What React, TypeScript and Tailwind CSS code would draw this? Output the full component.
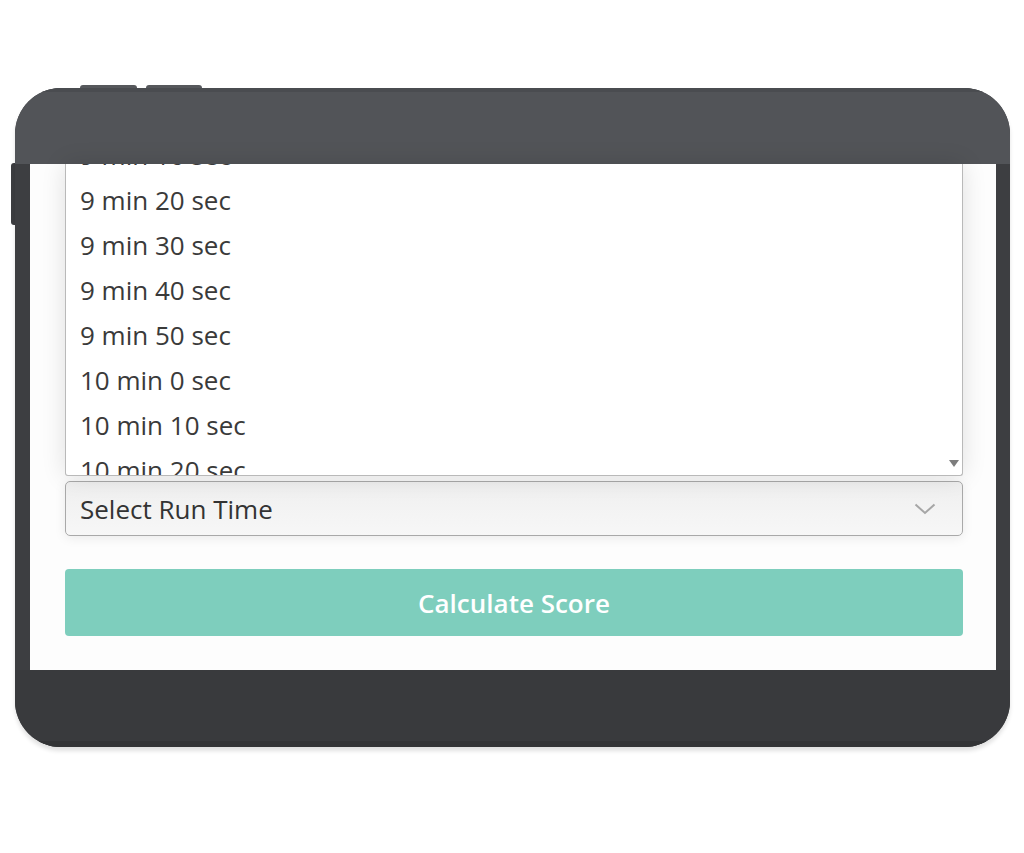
import React from "react";

const items = [
  "9 min 10 sec",
  "9 min 20 sec",
  "9 min 30 sec",
  "9 min 40 sec",
  "9 min 50 sec",
  "10 min 0 sec",
  "10 min 10 sec",
  "10 min 20 sec",
];

export default function App() {
  return (
    <div
      className="w-[1024px] h-[853px] bg-white overflow-hidden"
      style={{ fontFamily: '"Open Sans", "Noto Sans", sans-serif' }}
    >
      <div className="pt-[88px] pl-[15px]">
        <div className="relative w-[995px]">
          {/* top buttons */}
          <div className="absolute left-[65px] top-[-3px] w-[57px] h-[6px] rounded-t-[3px] bg-[#56585c]" />
          <div className="absolute left-[131px] top-[-3px] w-[56px] h-[6px] rounded-t-[3px] bg-[#56585c]" />
          {/* side button */}
          <div className="absolute left-[-4px] top-[75px] w-[6px] h-[62px] rounded-l-[3px] bg-[#3c3d40]" />
          <div className="relative h-[659px] rounded-[46px] overflow-hidden bg-[#3d3e41] flex flex-col shadow-[0_4px_4px_rgba(0,0,0,0.12)]">
            {/* top bezel */}
            <div className="h-[76px] shrink-0 bg-[#525458] border-t-[4px] border-[#4a4c50]" />
            {/* screen row */}
            <div className="h-[506px] shrink-0 flex">
              <div className="w-[15px] shrink-0 bg-[#3d3e41]" />
              <div className="w-[966px] shrink-0 bg-[#fdfdfd] flex flex-col pl-[35px] pr-[33px]">
                {/* dropdown list */}
                <div className="relative h-[312px] shrink-0 overflow-hidden bg-white border-x border-b border-[#b9b9b9] rounded-b-[3px] shadow-[0_0_24px_rgba(0,0,0,0.12)]">
                  <div className="mt-[-32px] flex flex-col">
                    {items.map((t) => (
                      <div
                        key={t}
                        className="h-[45px] shrink-0 flex items-center pl-[14px] text-[26px] text-[#3a3a3a] leading-none"
                      >
                        {t}
                      </div>
                    ))}
                  </div>
                  <svg
                    className="absolute right-[3px] bottom-[8px]"
                    width="10"
                    height="7"
                    viewBox="0 0 10 7"
                  >
                    <path d="M0 0 L10 0 L5 7 Z" fill="#7d7d7d" />
                  </svg>
                </div>
                {/* select */}
                <div className="mt-[5px] h-[55px] shrink-0 flex items-center justify-between pl-[14px] pr-[26px] rounded-[5px] border border-[#a9a9a9] bg-gradient-to-b from-[#efefef] to-[#f7f7f7] shadow-[0_2px_12px_rgba(0,0,0,0.08)]">
                  <span className="text-[26px] text-[#333333] leading-none">
                    Select Run Time
                  </span>
                  <svg width="22" height="12" viewBox="0 0 22 12">
                    <path
                      d="M1.5 1.5 L11 10 L20.5 1.5"
                      fill="none"
                      stroke="#a6a6a6"
                      strokeWidth="2"
                    />
                  </svg>
                </div>
                {/* button */}
                <div className="mt-[33px] h-[67px] shrink-0 flex items-center justify-center rounded-[4px] bg-[#7ecebd]">
                  <span className="text-[26px] font-semibold text-white leading-none">
                    Calculate Score
                  </span>
                </div>
              </div>
              <div className="w-[14px] shrink-0 bg-[#3d3e41]" />
            </div>
            {/* bottom bezel */}
            <div className="flex-1 bg-[#393a3d] border-b-[6px] border-[#333436]" />
          </div>
        </div>
      </div>
    </div>
  );
}
